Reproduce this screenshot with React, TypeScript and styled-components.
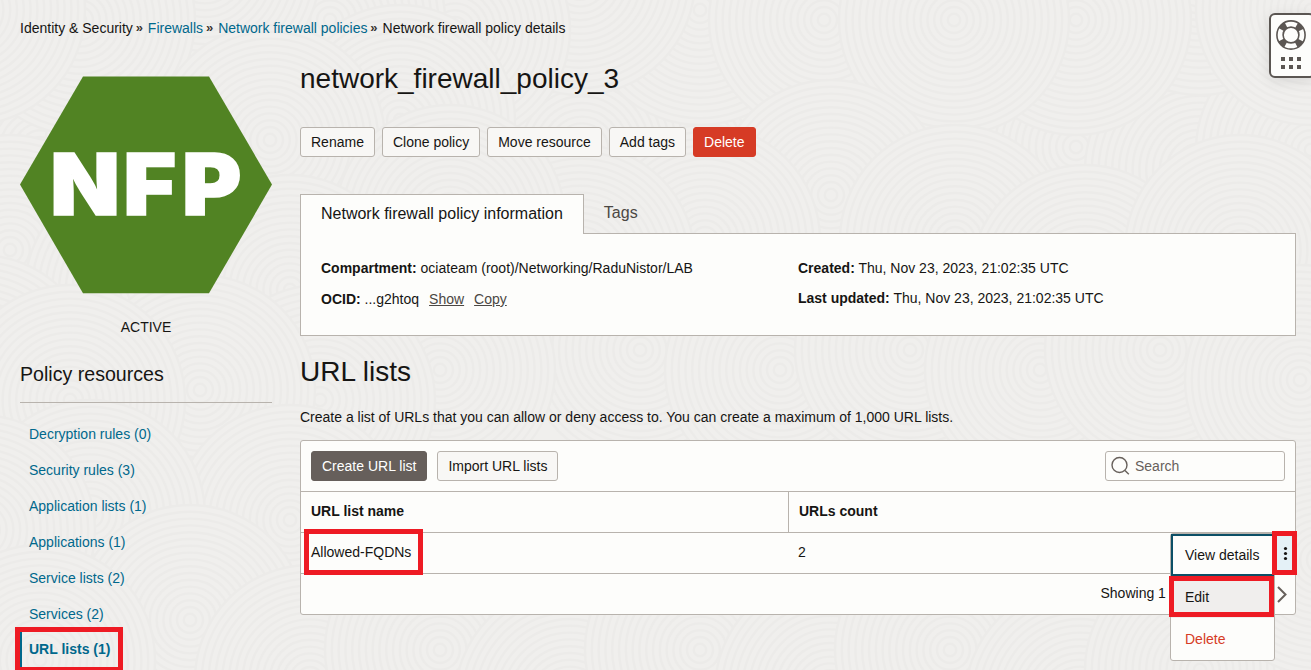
import React from 'react';
import styled, { createGlobalStyle, css } from 'styled-components';

const line = '#b8b3ad';
const ink = '#161513';
const blue = '#00688c';
const paper = '#fdfdfb';

const GlobalStyle = createGlobalStyle`
  * { box-sizing: border-box; }
  body {
    margin: 0;
    background: #f0efed;
    color: ${ink};
    font: 14px/20px "Liberation Sans", Arial, sans-serif;
    overflow: hidden;
  }
  a { color: ${blue}; text-decoration: none; }
  h1, h2, h3, p, ul { margin: 0; padding: 0; font-weight: 400; }
`;

const Page = styled.div`
  position: relative;
  isolation: isolate;
  width: 1311px;
  height: 670px;
  overflow: hidden;
`;

const Backdrop = styled.svg`
  position: absolute;
  inset: 0;
  z-index: -1;
`;

const Breadcrumbs = styled.nav`
  display: flex;
  align-items: center;
  height: 20px;
  margin: 18px 0 0 20px;
`;

const Chevrons = styled.span`
  font-size: 13px;
  font-weight: 700;
  margin: 0 5px 0 2.8px;
  color: #3a3631;
`;

const Columns = styled.div`
  display: grid;
  grid-template-columns: 252px 996px;
  column-gap: 28px;
  padding-left: 20px;
`;

const Sidebar = styled.aside`
  display: flex;
  flex-direction: column;
  padding-top: 38px;
`;

const Hexagon = styled.svg`
  display: block;
  width: 252px;
  height: 218px;
`;

const Status = styled.div`
  margin-top: 23px;
  text-align: center;
`;

const SideTitle = styled.h3`
  height: 66px;
  padding-top: 25px;
  font-size: 19.6px;
  line-height: 24px;
  border-bottom: 1px solid ${line};
`;

const SideList = styled.ul`
  list-style: none;
  margin-top: 13.4px;
`;

const SideItem = styled.li<{ $active?: boolean }>`
  height: 35.84px;
  padding-left: 9px;
  line-height: 36px;
  ${p => p.$active && css`
    padding-left: 7px;
    border-left: 2px solid ${blue};
    font-weight: 700;
  `}
`;

const Main = styled.main`
  display: flex;
  flex-direction: column;
  padding-top: 24px;
`;

const Title = styled.h1`
  font-size: 28px;
  line-height: 34px;
`;

const Actions = styled.div`
  display: flex;
  gap: 7px;
  margin-top: 31px;
`;

const Button = styled.button<{ $tone?: 'danger' | 'primary' }>`
  height: 30px;
  padding: 0 10px;
  border: 1px solid ${line};
  border-radius: 3px;
  background: #f8f7f5;
  color: ${ink};
  font: inherit;
  white-space: nowrap;
  ${p => p.$tone === 'danger' && css`background: #d63b25; border-color: #d63b25; color: #fff;`}
  ${p => p.$tone === 'primary' && css`background: #665f5b; border-color: #665f5b; color: #fff;`}
`;

const Tabs = styled.div`
  display: flex;
  margin-top: 37px;
`;

const Tab = styled.div<{ $active?: boolean }>`
  height: 40px;
  padding: 0 20px;
  font-size: 16px;
  line-height: 37px;
  color: #4b4743;
  ${p => p.$active && css`
    position: relative;
    z-index: 1;
    border: 1px solid ${line};
    border-bottom: 0;
    background: ${paper};
    color: ${ink};
  `}
`;

const Info = styled.section`
  display: grid;
  grid-template-columns: 477px 1fr;
  height: 103px;
  margin-top: -1px;
  padding: 24px 20px 0;
  border: 1px solid ${line};
  background: ${paper};
`;

const Field = styled.p<{ $low?: boolean }>`
  height: 30px;
  padding-top: ${p => (p.$low ? 1 : 0)}px;

  button {
    margin-left: 10px;
    padding: 0;
    border: 0;
    background: none;
    color: #4b4743;
    font: inherit;
    text-decoration: underline;
  }
`;

const Section = styled.h2`
  margin-top: 19px;
  font-size: 28px;
  line-height: 34px;
`;

const Lead = styled.p`
  margin-top: 18px;
`;

const Panel = styled.section`
  height: 175px;
  margin-top: 13px;
  border: 1px solid ${line};
  border-radius: 3px;
  background: ${paper};
`;

const Toolbar = styled.div`
  display: flex;
  gap: 10px;
  height: 50px;
  padding: 10px 10px 0;
`;

const Search = styled.label`
  display: flex;
  align-items: center;
  gap: 5px;
  width: 180px;
  height: 30px;
  margin-left: auto;
  padding-left: 5px;
  border: 1px solid ${line};
  border-radius: 3px;
  color: #67605b;
`;

const Row = styled.div<{ $head?: boolean }>`
  display: grid;
  grid-template-columns: 487px 1fr;
  height: 41px;
  border-top: 1px solid ${line};
  line-height: 38px;
  font-weight: ${p => (p.$head ? 700 : 400)};
`;

const Cell = styled.div<{ $divided?: boolean }>`
  padding-left: 10px;
  border-left: ${p => (p.$divided ? `1px solid ${line}` : 0)};
`;

const Pager = styled.footer`
  display: flex;
  align-items: center;
  justify-content: space-between;
  height: 41px;
  padding: 0 8px 0 799.5px;
  border-top: 1px solid ${line};

  span { margin-top: -2px; }
`;

const Menu = styled.div`
  position: absolute;
  left: 1170px;
  top: 533px;
  width: 105px;
  height: 128px;
  border: 1px solid ${line};
  border-radius: 3px;
  background: ${paper};
`;

const MenuItem = styled.div<{ $kind?: 'focus' | 'hover' | 'danger' }>`
  height: 42px;
  padding-left: 14px;
  line-height: 42px;
  ${p => p.$kind === 'focus' && css`border: 2px solid #0b4f66; padding-left: 12px; line-height: 39px;`}
  ${p => p.$kind === 'hover' && css`background: #f0eeed;`}
  ${p => p.$kind === 'danger' && css`color: #d63b25;`}
`;

const Kebab = styled.div`
  position: absolute;
  left: 1275px;
  top: 533px;
  width: 20px;
  height: 40px;
  background: #e4f1f7;

  svg { display: block; }
`;

const Marker = styled.div<{ $x: number; $y: number; $w: number; $h: number }>`
  position: absolute;
  left: ${p => p.$x}px;
  top: ${p => p.$y}px;
  width: ${p => p.$w}px;
  height: ${p => p.$h}px;
  border: 5px solid #ee1b24;
`;

const Help = styled.div`
  position: absolute;
  left: 1269px;
  top: 13px;
  width: 46px;
  height: 65px;
  padding: 5px 0 0 5px;
  border: 2px solid #5b5652;
  border-radius: 6px;
  background: ${paper};
  box-shadow: 0 3px 14px rgba(0, 0, 0, 0.1);

  svg { display: block; }
`;

const discs = [
  [1076, 147], [1200, 170], [1311, 150], [706, 140], [582, 150], [40, 150], [160, 150],
  [1200, -20], [1076, 20], [700, 10], [824, 20], [954, 20], [1311, 10], [580, -20],
  [455, 30], [330, 20], [205, -30], [80, 20], [-30, 10],
  [400, 120], [270, 140], [831, 195], [955, 240], [1085, 280], [1240, 250], [705, 240],
  [580, 260], [450, 220], [10, 250], [140, 290], [290, 290], [-20, 370],
  [640, 350], [780, 370], [910, 350], [1040, 370], [1160, 350], [1300, 380], [440, 370],
  [320, 400], [200, 390], [70, 400], [290, 520], [90, 515], [-20, 530],
  [190, 620], [40, 660], [310, 680], [440, 650], [570, 700], [700, 650],
  [830, 690], [950, 650], [1080, 700], [1200, 670], [1320, 560],
];
const radii = Array.from({ length: 17 }, (_, i) => 115 - i * 6.8);

const Texture = () => (
  <Backdrop width="1311" height="670" viewBox="0 0 1311 670">
    {discs.map(([x, y]) => (
      <g key={`${x},${y}`} stroke="#ecebe9" strokeWidth="2.4">
        {radii.map(r => <circle key={r} cx={x} cy={y} r={r} fill={r === 115 ? '#f0efed' : 'none'} />)}
      </g>
    ))}
  </Backdrop>
);

const Lifebuoy = () => (
  <svg width="30" height="50" viewBox="0 0 30 50">
    <g fill="none" stroke="#5b5652">
      <circle cx="15" cy="15" r="11" strokeWidth="6.5" strokeDasharray="6.4 10.88" strokeDashoffset="-5.44" />
      <circle cx="15" cy="15" r="14.1" strokeWidth="1.6" />
      <circle cx="15" cy="15" r="7.9" strokeWidth="1.6" />
    </g>
    {[5, 13, 21].map(x => [37, 45].map(y => (
      <rect key={`${x}-${y}`} x={x} y={y} width="4" height="4" fill="#5b5652" />
    )))}
  </svg>
);

const sideLinks = ['Decryption rules (0)', 'Security rules (3)', 'Application lists (1)', 'Applications (1)', 'Service lists (2)', 'Services (2)', 'URL lists (1)'];

export default function App() {
  return (
    <Page>
      <GlobalStyle />
      <Texture />
      <Breadcrumbs>
        <span>Identity &amp; Security</span><Chevrons>»</Chevrons>
        <a>Firewalls</a><Chevrons>»</Chevrons>
        <a>Network firewall policies</a><Chevrons>»</Chevrons>
        <span>Network firewall policy details</span>
      </Breadcrumbs>
      <Columns>
        <Sidebar>
          <Hexagon viewBox="0 0 252 218">
            <path d="M0 108.5 63 .6H189L252 108.5 189 217.3H63Z" fill="#518323" />
            <text
              transform="translate(0 139.2) scale(1.07 1)"
              x="28.2 96.4 151.4"
              fill="#fff"
              stroke="#fff"
              strokeWidth="1.6"
              fontFamily="Inter, sans-serif"
              fontWeight="900"
              fontSize="84.6"
            >
              NFP
            </text>
          </Hexagon>
          <Status>ACTIVE</Status>
          <SideTitle>Policy resources</SideTitle>
          <SideList>
            {sideLinks.map((label, i) => (
              <SideItem key={label} $active={i === sideLinks.length - 1}><a>{label}</a></SideItem>
            ))}
          </SideList>
        </Sidebar>
        <Main>
          <Title>network_firewall_policy_3</Title>
          <Actions>
            <Button>Rename</Button>
            <Button>Clone policy</Button>
            <Button>Move resource</Button>
            <Button>Add tags</Button>
            <Button $tone="danger">Delete</Button>
          </Actions>
          <Tabs>
            <Tab $active>Network firewall policy information</Tab>
            <Tab>Tags</Tab>
          </Tabs>
          <Info>
            <div>
              <Field><b>Compartment:</b> ociateam (root)/Networking/RaduNistor/LAB</Field>
              <Field $low><b>OCID:</b> ...g2htoq<button>Show</button><button>Copy</button></Field>
            </div>
            <div>
              <Field><b>Created:</b> Thu, Nov 23, 2023, 21:02:35 UTC</Field>
              <Field><b>Last updated:</b> Thu, Nov 23, 2023, 21:02:35 UTC</Field>
            </div>
          </Info>
          <Section>URL lists</Section>
          <Lead>Create a list of URLs that you can allow or deny access to. You can create a maximum of 1,000 URL lists.</Lead>
          <Panel>
            <Toolbar>
              <Button $tone="primary">Create URL list</Button>
              <Button>Import URL lists</Button>
              <Search>
                <svg width="19" height="20" viewBox="0 0 19 20" fill="none" stroke="#67605b" strokeWidth="1.4">
                  <circle cx="8.5" cy="9" r="7.5" />
                  <path d="M14 14.5 17.8 18.3" />
                </svg>
                Search
              </Search>
            </Toolbar>
            <Row $head><Cell>URL list name</Cell><Cell $divided>URLs count</Cell></Row>
            <Row><Cell>Allowed-FQDNs</Cell><Cell>2</Cell></Row>
            <Pager>
              <span>Showing 1</span>
              <svg width="10" height="18" viewBox="0 0 10 18" fill="none" stroke="#67605b" strokeWidth="2">
                <path d="M1 2 8.5 9.5 1 17" />
              </svg>
            </Pager>
          </Panel>
        </Main>
      </Columns>
      <Menu>
        <MenuItem $kind="focus">View details</MenuItem>
        <MenuItem $kind="hover">Edit</MenuItem>
        <MenuItem $kind="danger">Delete</MenuItem>
      </Menu>
      <Kebab>
        <svg width="20" height="40" viewBox="0 0 20 40" fill={ink}>
          <circle cx="10.5" cy="15.5" r="1.6" />
          <circle cx="10.5" cy="20.5" r="1.6" />
          <circle cx="10.5" cy="25.5" r="1.6" />
        </svg>
      </Kebab>
      <Marker $x={15} $y={627} $w={108} $h={45} />
      <Marker $x={304} $y={529} $w={119} $h={46} />
      <Marker $x={1272} $y={531} $w={25} $h={44} />
      <Marker $x={1169} $y={576} $w={105} $h={41} />
      <Help><Lifebuoy /></Help>
    </Page>
  );
}
